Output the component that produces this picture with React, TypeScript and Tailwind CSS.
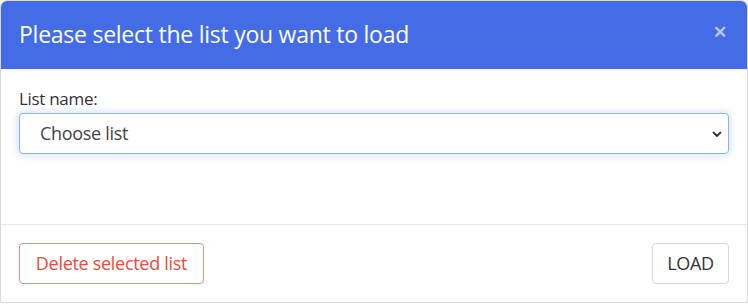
export default function App() {
  return (
    <div className="h-[305px] w-[748px] bg-white font-['Open_Sans',sans-serif]">
      <div className="flex h-[303px] flex-col overflow-hidden rounded-t-[7px] border border-[#d9d9d9] bg-white">
        <div className="flex h-[68px] items-center justify-between bg-[#436ce6] pl-[18px] pr-[20px]">
          <h1 className="pb-[1px] text-[23px] leading-none tracking-[-0.25px] text-white">Please select the list you want to load</h1>
          <button className="mb-[8px] text-[17px] font-bold leading-none text-[#b7c6f5]">✕</button>
        </div>
        <div className="flex h-[156px] flex-col border-b border-[#e5e5e5] px-[18px] pt-[18px]">
          <label className="text-[17px] leading-[23px] tracking-[-0.3px] text-[#333]">List name:</label>
          <div className="mt-[3px] flex h-[41px] items-center justify-between rounded-[4px] border border-[#8bb4ee] bg-white pl-[20px] pr-[5px] shadow-[0_0_6px_2px_rgba(102,158,236,0.25)]">
            <span className="text-[18px] tracking-[-0.3px] text-[#444]">Choose list</span>
            <svg width="12" height="12" viewBox="0 0 12 12" fill="none" stroke="#333" strokeWidth="1.8" strokeLinecap="round" strokeLinejoin="round">
              <path d="M2.5 4.5 6 8l3.5-3.5" />
            </svg>
          </div>
        </div>
        <div className="flex flex-1 items-center justify-between px-[18px]">
          <button className="flex h-[41px] w-[185px] items-center justify-center rounded-[4px] border border-[#f08a80] text-[18px] tracking-[-0.3px] text-[#e74c3c]">
            Delete selected list
          </button>
          <button className="flex h-[41px] w-[77px] items-center justify-center rounded-[4px] border border-[#d6d6d6] text-[18px] tracking-[-0.3px] text-[#333]">
            LOAD
          </button>
        </div>
      </div>
    </div>
  );
}
